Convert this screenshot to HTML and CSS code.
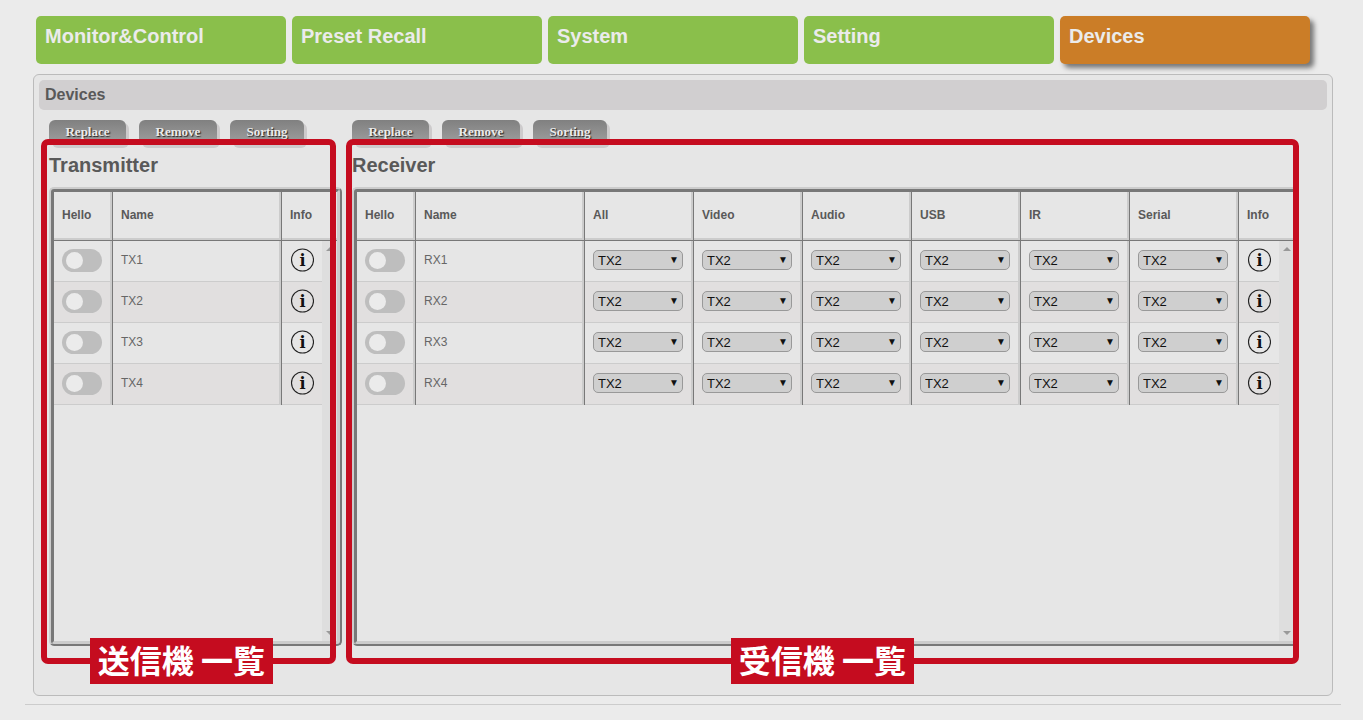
FILE: index.html
```html
<!DOCTYPE html>
<html lang="ja">
<head>
<meta charset="utf-8">
<title>Devices</title>
<link rel="stylesheet" href="styles.css">
</head>
<body>
<nav class="tabs">
  <a class="tab" href="#monitor">Monitor&amp;Control</a>
  <a class="tab" href="#preset">Preset Recall</a>
  <a class="tab" href="#system">System</a>
  <a class="tab" href="#setting">Setting</a>
  <a class="tab active" href="#devices" aria-current="page">Devices</a>
</nav>
<main class="panel">
  <h1 class="panel-title">Devices</h1>
  <div class="columns">
    <section class="group transmitter">
      <div class="actions">
        <button class="action" type="button">Replace</button>
        <button class="action" type="button">Remove</button>
        <button class="action" type="button">Sorting</button>
      </div>
      <h2 class="group-title">Transmitter</h2>
      <div class="frame">
        <table class="grid">
          <thead><tr><th class="c-hello">Hello</th><th class="c-name">Name</th><th class="c-info">Info</th></tr></thead>
          <tbody id="tx"></tbody>
        </table>
        <div class="side"><div class="side-head"></div><div class="track"><span class="up"></span><span class="down"></span></div></div>
      </div>
      <div class="callout"><span class="callout-label">送信機 一覧</span></div>
    </section>
    <section class="group receiver">
      <div class="actions">
        <button class="action" type="button">Replace</button>
        <button class="action" type="button">Remove</button>
        <button class="action" type="button">Sorting</button>
      </div>
      <h2 class="group-title">Receiver</h2>
      <div class="frame">
        <table class="grid">
          <thead><tr><th class="c-hello">Hello</th><th class="c-name">Name</th><th class="c-route">All</th><th class="c-route">Video</th><th class="c-route">Audio</th><th class="c-route">USB</th><th class="c-route">IR</th><th class="c-route">Serial</th><th class="c-info">Info</th></tr></thead>
          <tbody id="rx"></tbody>
        </table>
        <div class="side"><div class="side-head"></div><div class="track"><span class="up"></span><span class="down"></span></div></div>
      </div>
      <div class="callout"><span class="callout-label">受信機 一覧</span></div>
    </section>
  </div>
</main>
<hr class="rule">
<script src="script.js"></script>
</body>
</html>
```
FILE: styles.css
```css
* { box-sizing: border-box; }

body {
  margin: 0;
  padding: 16px 30px 0 33px;
  background: #ebebeb;
  color: #595959;
  font-family: "Liberation Sans", Arial, sans-serif;
  font-size: 12px;
}

.tabs { display: flex; gap: 6px; padding-left: 3px; }

.tab {
  width: 250px;
  height: 48px;
  padding: 8px 9px;
  border-radius: 5px;
  background: #8abf4b;
  color: #ebebeb;
  font-size: 20px;
  font-weight: bold;
  line-height: 24px;
  text-decoration: none;
}

.tab.active { background: #cb7d27; box-shadow: 4px 4px 5px #777; }

.panel {
  margin-top: 10px;
  padding: 5px 5px 49px;
  border: 1px solid #bbb;
  border-radius: 6px;
  background: #e6e6e6;
}

.panel-title {
  margin: 0;
  padding: 0 6px;
  border-radius: 5px;
  background: #d1cfd0;
  font-size: 16px;
  line-height: 30px;
}

.columns { display: flex; gap: 10px; padding: 10px 28px 0 10px; }
.group { position: relative; }
.transmitter { width: 293px; }
.receiver { flex: 1; }

.actions { display: flex; gap: 13px; }

.action {
  height: 25px;
  padding: 0 16px 2px;
  border: 0;
  border-radius: 6px;
  background: linear-gradient(#808080, #a0a0a0);
  box-shadow: 3px 3px 0 #cdcbcc;
  color: #ebebeb;
  font: bold 13px "Liberation Serif", "Times New Roman", serif;
  text-shadow: 1px 1px 1px #222;
}

.action:nth-child(1) { width: 77px; }
.action:nth-child(2) { width: 78px; }
.action:nth-child(3) { width: 74px; }

.group-title {
  margin: 8px 0 10px;
  font-size: 20px;
  line-height: 24px;
}

.frame {
  display: flex;
  align-items: stretch;
  min-height: 459px;
  border: 5px solid;
  border-color: #ccc;
  border-style: ridge;
  border-radius: 5px;
}

.grid {
  flex: 1;
  align-self: flex-start;
  width: 100%;
  table-layout: fixed;
  border-collapse: separate;
  border-spacing: 0;
}

.grid th, .grid td {
  padding: 0 8px;
  border-right: 3px ridge #ccc;
  text-align: left;
  vertical-align: middle;
}

.grid th { height: 49px; border-bottom: 3px ridge #ccc; }
.grid td { height: 41px; padding-bottom: 2px; border-bottom: 1px solid #ccc; color: #666; }
.grid th:last-child, .grid td:last-child { border-right: 0; }
.grid tbody tr:nth-child(even) { background: #e1dfdf; }

.c-hello { width: 59px; }
.c-route { width: 109px; }
.c-info { width: 40px; white-space: nowrap; }

.side { flex: none; display: flex; flex-direction: column; width: 15px; }
.side-head { height: 49px; border-bottom: 3px ridge #ccc; }

.track {
  flex: 1;
  display: flex;
  flex-direction: column;
  justify-content: space-between;
  align-items: center;
  padding: 6px 0;
  background: #dedede;
}

.up, .down { border: 4px solid transparent; border-top-width: 0; border-bottom-color: #999; }
.down { border-top: 4px solid #999; border-bottom-width: 0; }

.switch {
  display: block;
  width: 40px;
  height: 23px;
  margin: 0;
  padding: 3px 4px;
  border-radius: 12px;
  background: #bebebe;
  appearance: none;
}

.switch::before {
  content: "";
  display: block;
  width: 17px;
  height: 17px;
  border-radius: 50%;
  background: #ebebeb;
}

.switch:checked::before { margin-left: auto; }

.picker { position: relative; display: block; }

.picker::after {
  content: "▼";
  position: absolute;
  top: 0;
  right: 4px;
  color: #111;
  font-size: 10px;
  line-height: 19px;
  pointer-events: none;
}

.select {
  display: block;
  width: 100%;
  height: 20px;
  padding: 0 4px;
  border: 1px solid #999;
  border-radius: 5px;
  background: #cfcfcf;
  color: #111;
  font: 13px "Liberation Sans", Arial, sans-serif;
  appearance: none;
}

.info {
  display: block;
  width: 24px;
  height: 24px;
  padding: 0;
  border: 0;
  background: none;
}

.icon { display: block; width: 24px; height: 24px; }
.icon circle { fill: none; stroke: #222; stroke-width: 1.1; }
.icon text { fill: #111; font: bold 16px "DejaVu Serif", serif; text-anchor: middle; }

.callout {
  position: absolute;
  top: 19px;
  bottom: -18px;
  left: -8px;
  right: 6px;
  display: flex;
  justify-content: center;
  align-items: flex-end;
  border: 6px solid #c50c1f;
  border-radius: 7px;
  pointer-events: none;
}

.receiver .callout { left: -6px; right: 0; }
.transmitter .callout { padding-right: 14px; }

.callout-label {
  margin-bottom: -26px;
  padding: 0 8px 4px;
  background: #c50c1f;
  color: #fff;
  font: bold 32px/42px "Noto Sans CJK JP", sans-serif;
  white-space: nowrap;
}

.rule { margin: 8px -8px 0; border: 0; border-top: 1px solid #ccc; }
```
FILE: script.js
```js
const channels = ["All", "Video", "Audio", "USB", "IR", "Serial"];
const sources = ["TX1", "TX2", "TX3", "TX4"];

function picker(device, channel) {
  const options = sources.map(s => `<option${s === "TX2" ? " selected" : ""}>${s}</option>`).join("");
  return `<td><span class="picker"><select class="select" aria-label="${device} ${channel}">${options}</select></span></td>`;
}

function row(device, routes) {
  return `<tr>
    <td><input class="switch" type="checkbox" aria-label="${device} hello"></td>
    <td>${device}</td>
    ${routes.map(c => picker(device, c)).join("")}
    <td><button class="info" type="button" aria-label="${device} info"><svg class="icon" viewBox="0 0 24 24"><circle cx="12.5" cy="12" r="11"/><text x="12.5" y="18">i</text></svg></button></td>
  </tr>`;
}

for (const [id, prefix, routes] of [["tx", "TX", []], ["rx", "RX", channels]]) {
  document.getElementById(id).innerHTML = [1, 2, 3, 4].map(n => row(prefix + n, routes)).join("");
}
```
